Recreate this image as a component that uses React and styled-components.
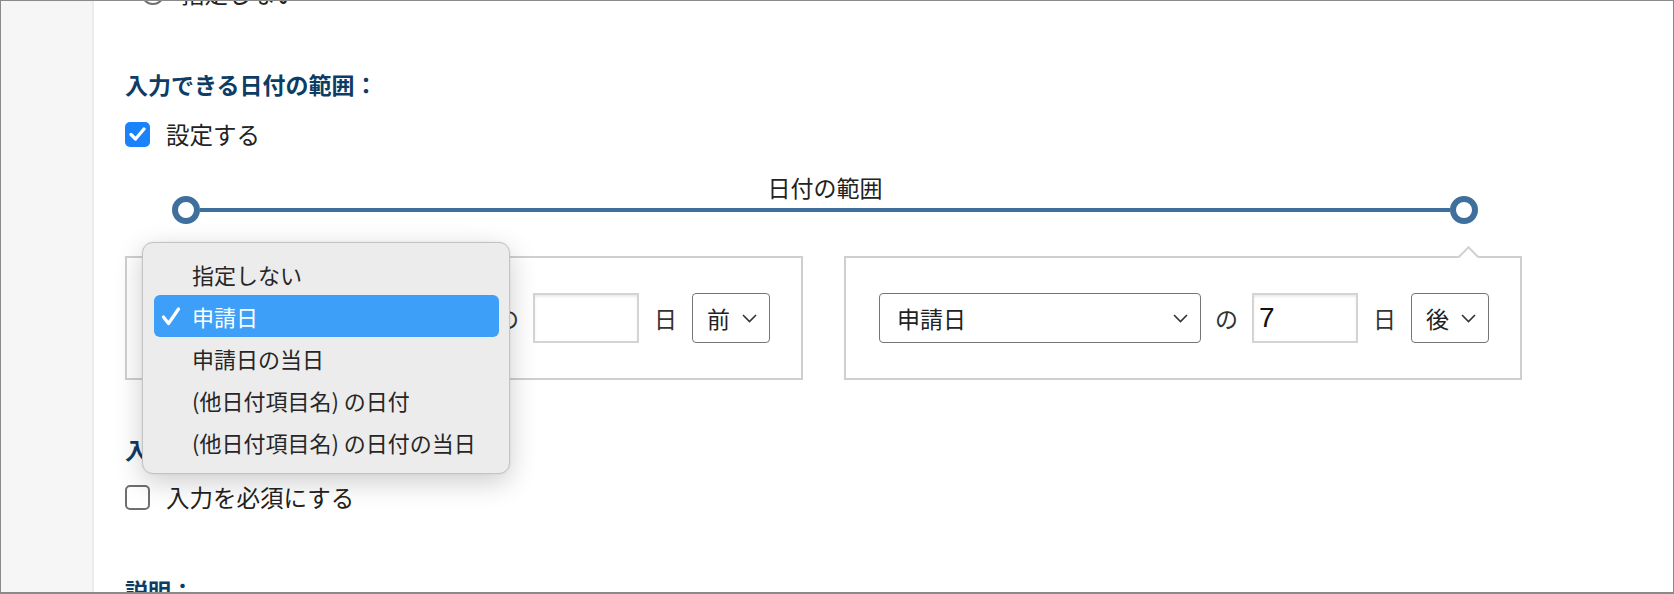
import React from "react";
import styled, { createGlobalStyle } from "styled-components";

const GlobalStyle = createGlobalStyle`
  html, body {
    margin: 0;
    padding: 0;
    background: #ffffff;
    overflow: hidden;
  }
  body {
    font-family: "Noto Sans CJK JP", "Noto Sans", sans-serif;
    color: #222222;
  }
`;

const Frame = styled.div`
  width: 1674px;
  height: 594px;
  box-sizing: border-box;
  border: 1px solid #8a8a8a;
  border-bottom-width: 2px;
  display: flex;
  overflow: hidden;
  background: #ffffff;
`;

const Sidebar = styled.div`
  width: 91px;
  flex-shrink: 0;
  background: #f6f6f6;
  border-right: 2px solid #ececec;
`;

const Main = styled.div`
  flex: 1;
  padding-left: 31px;
  padding-right: 150px;
`;

const Content = styled.div`
  margin-top: -24px;
  display: flex;
  flex-direction: column;
`;

const Heading = styled.div`
  margin-top: ${({ $gap }) => $gap}px;
  font-size: 23px;
  line-height: 30px;
  font-weight: 700;
  color: #0d3c65;
`;

const OptionRow = styled.label`
  margin-top: ${({ $gap }) => $gap || 0}px;
  padding-left: ${({ $indent }) => $indent || 0}px;
  height: 32px;
  display: flex;
  align-items: center;
  gap: 16px;
  font-size: 23.5px;
  color: #222;
`;

const Radio = styled.span`
  width: 24px;
  height: 24px;
  box-sizing: border-box;
  border-radius: 50%;
  border: 2px solid #6f6f6f;
  background: #fff;
`;

const Check = styled.span`
  width: 25px;
  height: 25px;
  box-sizing: border-box;
  border-radius: 5px;
  display: flex;
  align-items: center;
  justify-content: center;
  background: ${({ $on }) => ($on ? "#1a82fb" : "#ffffff")};
  border: ${({ $on }) => ($on ? "none" : "2px solid #6f6f6f")};
`;

const Track = styled.div`
  margin-top: 25px;
  padding: 0 45px 0 47px;
  display: flex;
  align-items: flex-end;
`;

const Knob = styled.span`
  width: 28px;
  height: 28px;
  box-sizing: border-box;
  border-radius: 50%;
  border: 6px solid #3f6f9c;
  background: #fff;
  flex-shrink: 0;
`;

const TrackMiddle = styled.div`
  flex: 1;
  display: flex;
  flex-direction: column;
  align-items: center;
  padding-bottom: 12px;
`;

const TrackLabel = styled.div`
  font-size: 23px;
  line-height: 24px;
  color: #222;
  margin-bottom: 9px;
`;

const TrackLine = styled.div`
  align-self: stretch;
  height: 4px;
  background: #3f6f9c;
`;

const Panels = styled.div`
  margin-top: 32px;
  display: grid;
  grid-template-columns: 678px 678px;
  gap: 41px;
`;

const Panel = styled.div`
  position: relative;
  height: 124px;
  box-sizing: border-box;
  border: 2px solid #cfcfcf;
  padding: 0 31px 0 33px;
  display: flex;
  align-items: center;

  &::before {
    content: "";
    position: absolute;
    top: -9px;
    ${({ $caret }) => ($caret === "left" ? "left: 50px;" : "right: 44px;")}
    width: 15px;
    height: 15px;
    box-sizing: border-box;
    background: #fff;
    border-top: 2px solid #cfcfcf;
    border-left: 2px solid #cfcfcf;
    transform: rotate(45deg);
  }
`;

const Select = styled.div`
  position: relative;
  width: ${({ $w }) => $w}px;
  height: 50px;
  box-sizing: border-box;
  border: 1px solid #767676;
  border-radius: 4px;
  background: #fff;
  display: flex;
  align-items: center;
  justify-content: space-between;
  padding: 0 12px 0 ${({ $pl }) => $pl}px;
  font-size: 23px;
  color: #222;
  flex-shrink: 0;
`;

const Word = styled.span`
  font-size: 23px;
  color: #333;
  margin: 0 ${({ $m }) => $m}px;
`;

const NumberBox = styled.div`
  width: 112px;
  height: 50px;
  box-sizing: border-box;
  border: 2px solid #d4d4d4;
  box-shadow: inset 0 2px 2px rgba(0, 0, 0, 0.08);
  display: flex;
  align-items: center;
  padding-left: 5px;
  font-family: "Liberation Sans", Arial, sans-serif;
  font-size: 28px;
  color: #111;
`;

const Popup = styled.div`
  position: absolute;
  left: -19px;
  top: -52px;
  width: 368px;
  box-sizing: border-box;
  padding: 10px 10px 10px 11px;
  background: #ececec;
  border: 1px solid #c4c4c4;
  border-radius: 11px;
  box-shadow: 0 8px 28px rgba(0, 0, 0, 0.2), 0 0 2px rgba(0, 0, 0, 0.1);
  z-index: 5;
`;

const MenuItem = styled.div`
  height: 42px;
  display: flex;
  align-items: center;
  padding-left: 38px;
  position: relative;
  border-radius: 6px;
  font-size: 22px;
  color: ${({ $active }) => ($active ? "#ffffff" : "#262626")};
  background: ${({ $active }) => ($active ? "#3d9ff8" : "transparent")};
`;

const Tick = styled.svg`
  position: absolute;
  left: 7px;
  top: 12px;
`;

const Chevron = () => (
  <svg width="15" height="9" viewBox="0 0 15 9">
    <path d="M1 1 L7.5 7.5 L14 1" fill="none" stroke="#333" strokeWidth="1.6" />
  </svg>
);

const CheckMark = () => (
  <svg width="17" height="14" viewBox="0 0 17 14">
    <path d="M2 7.5 L6.5 12 L15 2" fill="none" stroke="#fff" strokeWidth="3.2" strokeLinecap="round" strokeLinejoin="round" />
  </svg>
);

const menuItems = ["指定しない", "申請日", "申請日の当日", "(他日付項目名) の日付", "(他日付項目名) の日付の当日"];

const RangeEditor = ({ caret, days, dir, open }) => (
  <Panel $caret={caret}>
    <Select $w={322} $pl={17}>
      <span>申請日</span>
      <Chevron />
      {open && (
        <Popup>
          {menuItems.map((item) => (
            <MenuItem key={item} $active={item === "申請日"}>
              {item === "申請日" && (
                <Tick width="20" height="19" viewBox="0 0 20 19">
                  <path d="M2.5 10 L7.5 16.5 L17.5 2" fill="none" stroke="#fff" strokeWidth="3.2" strokeLinecap="round" strokeLinejoin="round" />
                </Tick>
              )}
              {item}
            </MenuItem>
          ))}
        </Popup>
      )}
    </Select>
    <Word $m={14}>の</Word>
    <NumberBox>{days}</NumberBox>
    <Word $m={15}>日</Word>
    <Select $w={78} $pl={14}>
      <span>{dir}</span>
      <Chevron />
    </Select>
  </Panel>
);

export default function App() {
  return (
    <>
      <GlobalStyle />
      <Frame>
        <Sidebar />
        <Main>
          <Content>
            <OptionRow $indent={16}>
              <Radio />
              指定しない
            </OptionRow>

            <Heading $gap={60}>入力できる日付の範囲：</Heading>
            <OptionRow $gap={19}>
              <Check $on>
                <CheckMark />
              </Check>
              設定する
            </OptionRow>

            <Track>
              <Knob />
              <TrackMiddle>
                <TrackLabel>日付の範囲</TrackLabel>
                <TrackLine />
              </TrackMiddle>
              <Knob />
            </Track>

            <Panels>
              <RangeEditor caret="left" days="" dir="前" open />
              <RangeEditor caret="right" days="7" dir="後" />
            </Panels>

            <Heading $gap={54}>入力の必須：</Heading>
            <OptionRow $gap={17}>
              <Check />
              入力を必須にする
            </OptionRow>

            <Heading $gap={62}>説明：</Heading>
          </Content>
        </Main>
      </Frame>
    </>
  );
}
